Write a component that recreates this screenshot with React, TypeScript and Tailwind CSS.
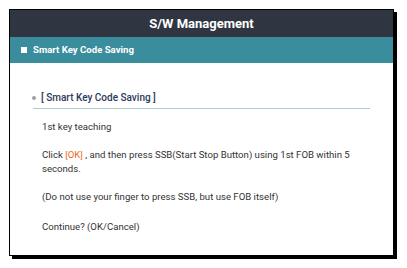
export default function App() {
  return (
    <div
      className="h-[268px] w-[407px] bg-white pl-[9px] pt-[9px]"
      style={{ fontFamily: "Roboto, 'Liberation Sans', sans-serif" }}
    >
      <div className="h-[247px] w-[385px] border border-black bg-white shadow-[3px_3px_0_0_#000]">
        <div className="flex h-[27px] items-center justify-center bg-[#2f3541] text-[13px] font-bold text-white">
          S/W Management
        </div>
        <div className="flex h-[26px] items-center gap-[6px] bg-[#3a8d9d] pl-[11px] text-[9.6px] font-bold text-white">
          <span className="h-[6px] w-[6px] bg-white" />
          Smart Key Code Saving
        </div>
        <div className="px-[23px] pt-[27px]">
          <div className="flex items-center gap-[5px] border-b border-[#a9cdd3] pb-[3px] text-[10px] font-medium text-[#2b3a5c]">
            <span className="ml-[-1px] h-[4px] w-[4px] rounded-full bg-[#9aa0a6]" />
            [ Smart Key Code Saving ]
          </div>
          <div className="flex flex-col gap-[14px] pl-[9px] pt-[11px] text-[9.6px] leading-[14px] text-[#333]">
            <p>1st key teaching</p>
            <p>
              Click <span className="text-[#f26a1b]">[OK]</span> , and then press SSB(Start Stop Button) using 1st FOB
              within 5 seconds.
            </p>
            <p>(Do not use your finger to press SSB, but use FOB itself)</p>
            <p className="pt-[2px]">Continue? (OK/Cancel)</p>
          </div>
        </div>
      </div>
    </div>
  );
}
